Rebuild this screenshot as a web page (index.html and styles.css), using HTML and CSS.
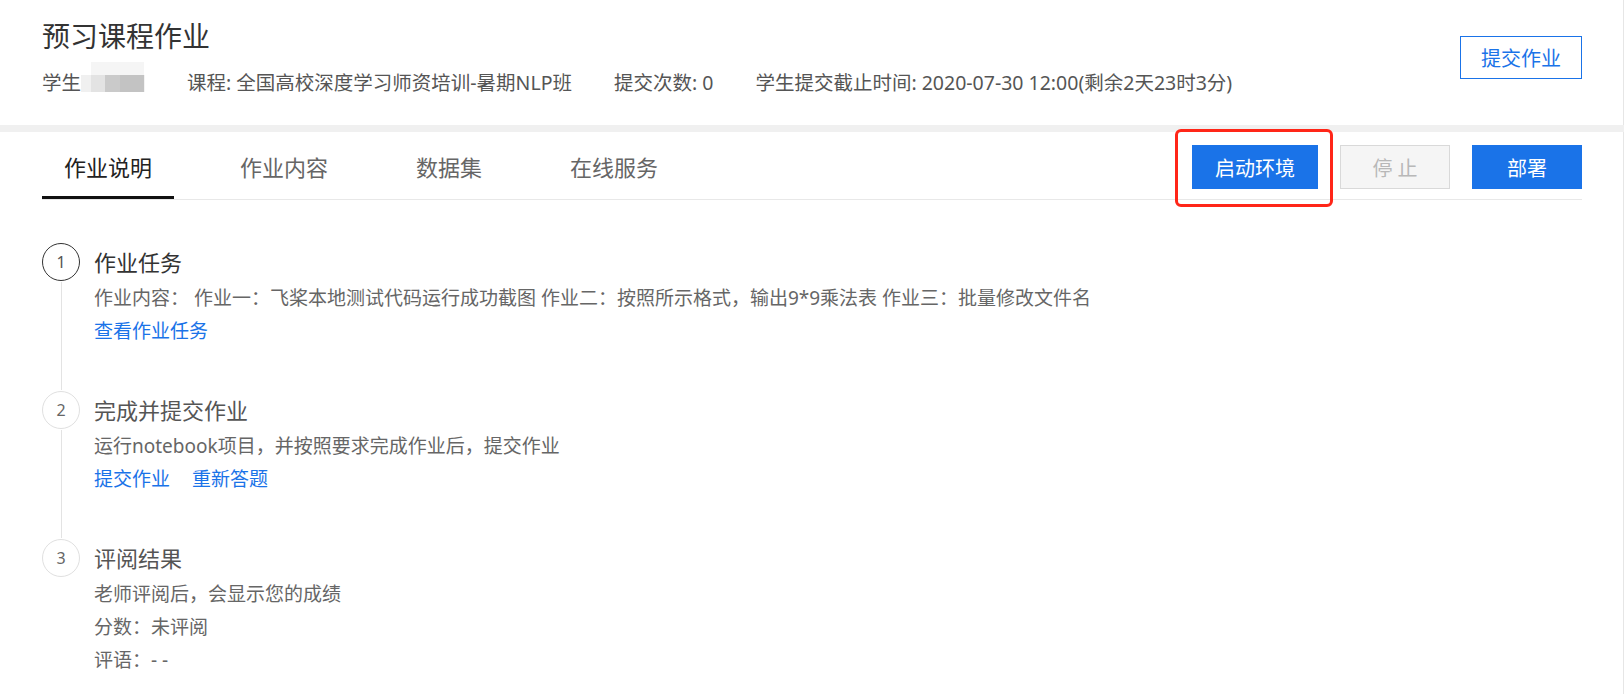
FILE: index.html
```html
<!DOCTYPE html>
<html lang="zh-CN">

<head>
    <meta charset="UTF-8" />
    <meta name="viewport" content="width=device-width, initial-scale=1.0" />
    <title>预习课程作业</title>
    <link rel="stylesheet" href="styles.css">
</head>

<body>
    <header class="head">
        <div class="head-info">
            <h1 class="head-title">预习课程作业</h1>
            <div class="meta">
                <span class="meta-item">学生<span class="masked"></span></span>
                <span class="meta-item">课程: 全国高校深度学习师资培训-暑期NLP班</span>
                <span class="meta-item">提交次数: 0</span>
                <span class="meta-item">学生提交截止时间: 2020-07-30 12:00(剩余2天23时3分)</span>
            </div>
        </div>
        <button class="btn btn-outline">提交作业</button>
    </header>

    <main class="panel">
        <div class="toolbar">
            <nav class="tabs">
                <a class="tab active">作业说明</a>
                <a class="tab">作业内容</a>
                <a class="tab">数据集</a>
                <a class="tab">在线服务</a>
            </nav>
            <div class="actions">
                <span class="mark-wrap">
                    <button class="btn btn-primary">启动环境</button>
                    <span class="mark"></span>
                </span>
                <button class="btn btn-disabled" disabled>停 止</button>
                <button class="btn btn-primary">部署</button>
            </div>
        </div>

        <ol class="steps">
            <li class="step active">
                <div class="step-rail">
                    <span class="step-num">1</span>
                    <span class="step-line"></span>
                </div>
                <div class="step-body">
                    <h3 class="step-title">作业任务</h3>
                    <p class="step-text">作业内容： 作业一：飞桨本地测试代码运行成功截图 作业二：按照所示格式，输出9*9乘法表 作业三：批量修改文件名</p>
                    <p class="step-text"><a class="link">查看作业任务</a></p>
                </div>
            </li>
            <li class="step">
                <div class="step-rail">
                    <span class="step-num">2</span>
                    <span class="step-line"></span>
                </div>
                <div class="step-body">
                    <h3 class="step-title">完成并提交作业</h3>
                    <p class="step-text">运行notebook项目，并按照要求完成作业后，提交作业</p>
                    <p class="step-text"><a class="link">提交作业</a><a class="link">重新答题</a></p>
                </div>
            </li>
            <li class="step">
                <div class="step-rail">
                    <span class="step-num">3</span>
                </div>
                <div class="step-body">
                    <h3 class="step-title">评阅结果</h3>
                    <p class="step-text">老师评阅后，会显示您的成绩</p>
                    <p class="step-text">分数：未评阅</p>
                    <p class="step-text">评语：- -</p>
                </div>
            </li>
        </ol>
    </main>
</body>

</html>
```

FILE: styles.css
```css
body {
    margin: 0;
    background: #f0f0f0;
    font-family: "Noto Sans", "Noto Sans CJK SC", sans-serif;
    color: #555;
}

.head {
    display: flex;
    justify-content: space-between;
    align-items: center;
    background: #fff;
    padding: 16px 41px 27px 42px;
    margin-bottom: 7px;
    border-right: 1px solid #e6e6e6;
}

.head-title {
    margin: 0;
    font-size: 28px;
    line-height: 40px;
    font-weight: normal;
    color: #333;
}

.meta {
    display: flex;
    gap: 42px;
    margin-top: 12px;
    font-size: 19.5px;
    line-height: 30px;
    color: #555;
}

/* blurred student name */
.masked {
    display: inline-block;
    width: 64px;
    height: 30px;
    margin-top: -6px;
    vertical-align: top;
    background:
        linear-gradient(to right, #f0f0f0 0 10px, #e3e3e3 10px 24px, #cacaca 24px 39px, #c3c3c3 39px 63px, #f3f3f3 63px) bottom / 100% 17px no-repeat,
        linear-gradient(to right, transparent 0 10px, #f5f5f5 10px 63px, transparent 63px) top / 100% 13px no-repeat;
}

.btn {
    height: 44px;
    min-width: 110px;
    padding: 0 22px;
    font-family: inherit;
    font-size: 20px;
    border: 1px solid transparent;
    border-radius: 0;
    cursor: pointer;
}

.btn-outline {
    height: 43px;
    min-width: 0;
    padding: 0 20px;
    background: #fff;
    color: #1a73e8;
    border-color: #1a73e8;
}

.btn-primary {
    background: #1a73e8;
    border-color: #1a73e8;
    color: #fff;
}

.btn-disabled {
    background: #f5f5f5;
    border-color: #d9d9d9;
    color: #b8b8b8;
    cursor: not-allowed;
}

.panel {
    background: #fff;
    padding: 0 41px 0 42px;
    min-height: calc(100vh - 132px);
    border-right: 1px solid #e6e6e6;
}

.toolbar {
    display: flex;
    justify-content: space-between;
    border-bottom: 1px solid #e8e8e8;
}

.tabs {
    display: flex;
}

.tab {
    padding: 20px 22px 14px;
    margin-right: 44px;
    font-size: 22px;
    line-height: 30px;
    color: #666;
    border-bottom: 3px solid transparent;
    cursor: pointer;
}

.tab.active {
    color: #222;
    border-bottom-color: #111;
}

.actions {
    display: flex;
    gap: 22px;
    align-self: flex-start;
    margin-top: 13px;
}

.mark-wrap {
    position: relative;
    display: flex;
}

/* red annotation box around the start button */
.mark {
    position: absolute;
    top: -16px;
    left: -17px;
    right: -15px;
    bottom: -18px;
    border: 3px solid #ff2618;
    border-radius: 6px;
    pointer-events: none;
}

.steps {
    list-style: none;
    margin: 0;
    padding: 42px 0 0;
}

.step {
    display: flex;
    gap: 14px;
}

.step-rail {
    display: flex;
    flex-direction: column;
    align-items: center;
    width: 38px;
}

.step-num {
    display: flex;
    align-items: center;
    justify-content: center;
    box-sizing: border-box;
    width: 38px;
    height: 38px;
    margin-top: 1px;
    border: 1px solid #e0e0e0;
    border-radius: 50%;
    font-size: 16px;
    color: #666;
}

.step.active .step-num {
    border-color: #333;
    color: #555;
}

.step-line {
    flex: 1;
    width: 1px;
    background: #e3e3e3;
    margin-top: 1px;
}

.step-body {
    padding-bottom: 42px;
}

.step-title {
    margin: 0;
    font-size: 22px;
    line-height: 40px;
    font-weight: normal;
    color: #555;
}

.step.active .step-title {
    color: #333;
}

.step-text {
    margin: 0;
    font-size: 19px;
    line-height: 33px;
    color: #666;
}

.link {
    color: #1a73e8;
    cursor: pointer;
    margin-right: 22px;
}
```
